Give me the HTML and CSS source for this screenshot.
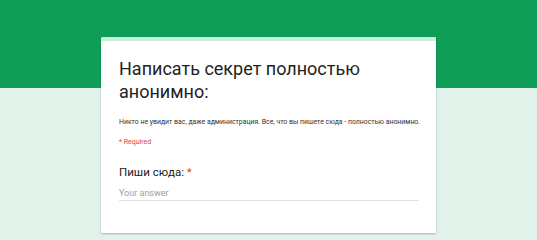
FILE: index.html
```html
<!DOCTYPE html>
<html lang="ru">
<head>
    <meta charset="UTF-8">
    <title>Написать секрет</title>
    <link rel="stylesheet" href="styles.css">
</head>
<body>
    <div class="page">
        <div class="form-card">
            <h1 class="form-title">Написать секрет полностью анонимно:</h1>
            <p class="form-desc">Никто не увидит вас, даже администрация. Все, что вы пишете сюда - полностью анонимно.</p>
            <p class="required-note">* Required</p>
            <div class="question">
                <label class="question-title" for="answer">Пиши сюда: <span class="star">*</span></label>
                <input type="text" id="answer" class="answer-input" placeholder="Your answer">
            </div>
        </div>
    </div>
</body>
</html>
```

FILE: styles.css
```css
body {
    margin: 0;
    font-family: Roboto, "Noto Sans", sans-serif;
    background: linear-gradient(to bottom, #109d58 0, #109d58 88px, #e0f2e9 88px);
    min-height: 240px;
    overflow: hidden;
}

.page {
    display: flex;
    justify-content: center;
    padding-top: 37px;
}

.form-card {
    width: 335px;
    height: 196px;
    box-sizing: border-box;
    background: #fff;
    border-top: 4px solid #cdeedd;
    border-radius: 1px;
    box-shadow: 0 1px 2px rgba(0, 0, 0, 0.25);
    padding: 16px 18px 0 18px;
}

.form-title {
    margin: 0;
    font-size: 18px;
    font-weight: 400;
    line-height: 23px;
    color: #222;
}

.form-desc {
    margin: 14px 0 0 0;
    font-size: 6.9px;
    line-height: 10px;
    color: #333;
    white-space: nowrap;
}

.required-note {
    margin: 10px 0 0 0;
    font-size: 7px;
    line-height: 10px;
    color: #db4437;
}

.question {
    margin-top: 18px;
    display: flex;
    flex-direction: column;
}

.question-title {
    font-size: 11.5px;
    line-height: 15px;
    color: #212121;
}

.star {
    color: #db4437;
}

.answer-input {
    margin-top: 7px;
    width: 300px;
    border: none;
    border-bottom: 1px solid #e0e0e0;
    padding: 0;
    font-family: Roboto, "Noto Sans", sans-serif;
    font-size: 9px;
    line-height: 13px;
    color: #222;
    outline: none;
    background: transparent;
}

.answer-input::placeholder {
    color: #9e9e9e;
}
```
